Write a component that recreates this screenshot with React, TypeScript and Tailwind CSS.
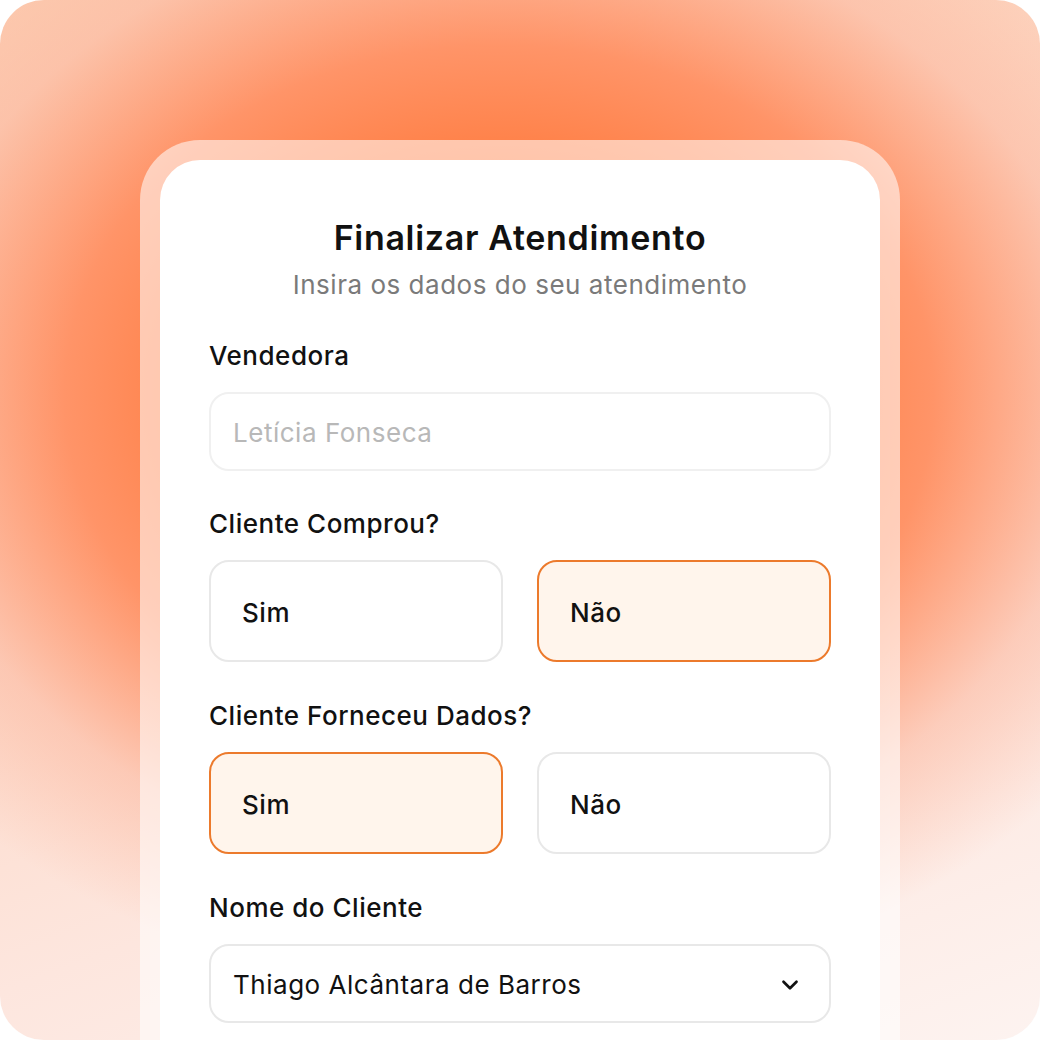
import { ChevronDown } from 'lucide-react';

const font = { fontFamily: 'Inter, "Noto Sans", sans-serif' };

function Choice({ label, active }: { label: string; active?: boolean }) {
  return (
    <div
      className={`flex h-[102px] items-center rounded-[20px] px-[31px] pt-[2px] text-[26px] font-medium tracking-[0.02em] text-[#111] ${
        active ? 'border-2 border-[#ec7a2c] bg-[#fff5ec]' : 'border-2 border-[#e8e8e8] bg-white'
      }`}
    >
      {label}
    </div>
  );
}

function Label({ children }: { children: React.ReactNode }) {
  return <div className="text-[26px] font-medium leading-[32px] tracking-[0.02em] text-[#111]">{children}</div>;
}

export default function App() {
  return (
    <div className="flex min-h-screen items-start bg-white" style={font}>
      <div className="h-[1040px] w-[1040px] overflow-hidden rounded-[44px] bg-[#fde8e0] bg-[radial-gradient(ellipse_72%_58%_at_48%_38%,#ff7c40_36%,#ff9468_58%,rgba(252,186,162,0.6)_80%,rgba(253,232,224,0)_100%),linear-gradient(160deg,#fcccb0_0%,#fdd8c6_40%,#fde6de_70%,#fdf3f0_100%)] px-[140px] pt-[140px]">
        <div className="h-full rounded-t-[60px] bg-white/55 px-[20px] pt-[20px]">
          <div className="h-full rounded-t-[40px] bg-white px-[49px] pt-[58px]">
            <div className="text-center">
              <h1 className="text-[34px] font-semibold leading-[40px] tracking-[0.02em] text-[#111]">Finalizar Atendimento</h1>
              <p className="mt-[11px] text-[26px] leading-[32px] tracking-[0.02em] text-[#7a7a7a]">Insira os dados do seu atendimento</p>
            </div>

            <div className="mt-[39px]">
              <Label>Vendedora</Label>
              <div className="mt-[20px] flex h-[79px] items-center rounded-[20px] border-2 border-[#f0f0f0] px-[22px] pt-[2px] text-[26px] tracking-[0.02em] text-[#b8b8b8]">
                Letícia Fonseca
              </div>
            </div>

            <div className="mt-[37px]">
              <Label>Cliente Comprou?</Label>
              <div className="mt-[20px] grid grid-cols-2 gap-[34px]">
                <Choice label="Sim" />
                <Choice label="Não" active />
              </div>
            </div>

            <div className="mt-[38px]">
              <Label>Cliente Forneceu Dados?</Label>
              <div className="mt-[20px] grid grid-cols-2 gap-[34px]">
                <Choice label="Sim" active />
                <Choice label="Não" />
              </div>
            </div>

            <div className="mt-[38px]">
              <Label>Nome do Cliente</Label>
              <div className="mt-[20px] flex h-[79px] items-center justify-between rounded-[20px] border-2 border-[#e8e8e8] pl-[22px] pr-[26px] pt-[2px] text-[26px] tracking-[0.02em] text-[#111]">
                <span>Thiago Alcântara de Barros</span>
                <ChevronDown className="h-[26px] w-[26px]" strokeWidth={2.5} />
              </div>
            </div>
          </div>
        </div>
      </div>
    </div>
  );
}
